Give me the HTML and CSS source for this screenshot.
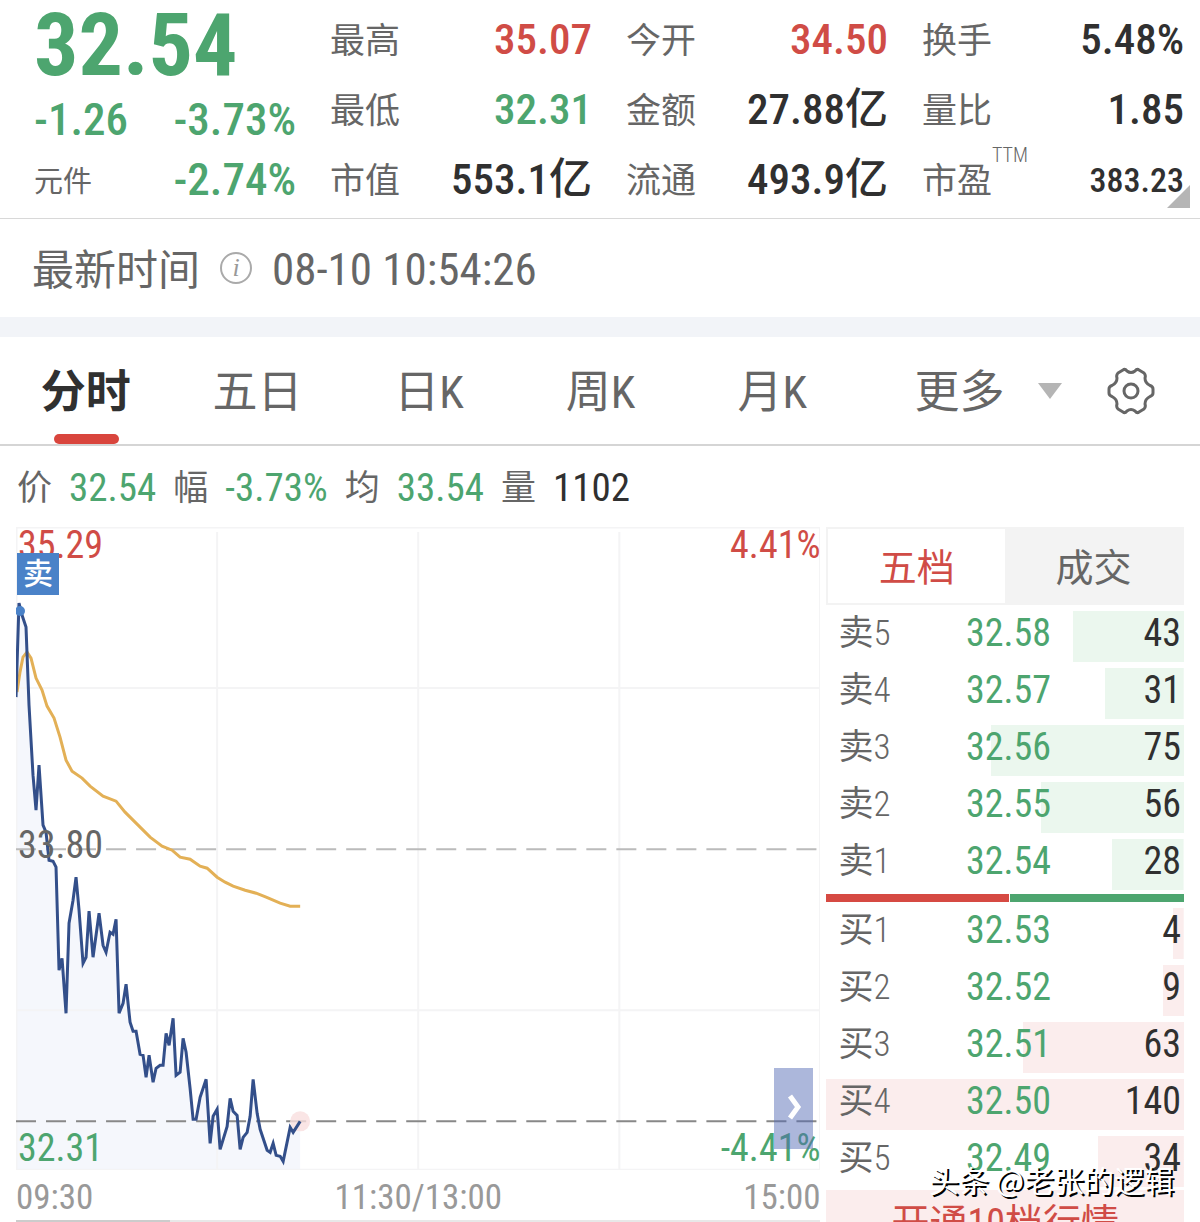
FILE: index.html
```
<!DOCTYPE html>
<html lang="zh-CN">
<head>
    <meta charset="UTF-8">
    <meta name="viewport" content="width=device-width, initial-scale=1.0">
    <title>分时行情</title>
    <link rel="stylesheet" href="styles.css">
</head>
<body>
    <div class="page">
        <!-- Quote summary -->
        <header class="quote">
            <div class="quote-main">
                <div class="price down">32.54</div>
                <div class="change down"><span>-1.26</span><span>-3.73%</span></div>
                <div class="change down"><span class="sector">元件</span><span>-2.74%</span></div>
            </div>
            <dl class="stats">
                <div class="stat"><dt>最高</dt><dd class="up">35.07</dd></div>
                <div class="stat"><dt>最低</dt><dd class="down">32.31</dd></div>
                <div class="stat"><dt>市值</dt><dd>553.1亿</dd></div>
            </dl>
            <dl class="stats">
                <div class="stat"><dt>今开</dt><dd class="up">34.50</dd></div>
                <div class="stat"><dt>金额</dt><dd>27.88亿</dd></div>
                <div class="stat"><dt>流通</dt><dd>493.9亿</dd></div>
            </dl>
            <dl class="stats">
                <div class="stat"><dt>换手</dt><dd>5.48%</dd></div>
                <div class="stat"><dt>量比</dt><dd>1.85</dd></div>
                <div class="stat"><dt>市盈<sup>TTM</sup></dt><dd class="small">383.23</dd></div>
            </dl>
            <span class="corner"></span>
        </header>

        <div class="time-row">
            <span class="time-label">最新时间</span>
            <button class="info" aria-label="说明">i</button>
            <time>08-10 10:54:26</time>
        </div>

        <nav class="tabs">
            <button class="tab active">分时</button>
            <button class="tab">五日</button>
            <button class="tab">日K</button>
            <button class="tab">周K</button>
            <button class="tab">月K</button>
            <button class="more"><span class="more-text">更多</span><span class="caret"></span></button>
            <button class="settings" aria-label="设置">
                <svg viewBox="0 0 48 48" width="48" height="48" fill="none" stroke="#666" stroke-width="3" stroke-linejoin="round">
                    <path d="M16 3 Q18 1.500 20 4 Q24 7 28 4 Q30 1.500 32 3 L37 6 Q39 8 38 11 Q38 16 43 18.500 Q46 19.500 46 22 V26 Q46 28.500 43 29.500 Q38 32 38 37 Q39 40 37 42 L32 45 Q30 46.500 28 44 Q24 41 20 44 Q18 46.500 16 45 L11 42 Q9 40 10 37 Q10 32 5 29.500 Q2 28.500 2 26 V22 Q2 19.500 5 18.500 Q10 16 10 11 Q9 8 11 6 Z"/>
                    <circle cx="24" cy="24" r="7"/>
                </svg>
            </button>
        </nav>

        <div class="legend">
            <span>价</span><b class="down">32.54</b>
            <span>幅</span><b class="down">-3.73%</b>
            <span>均</span><b class="down">33.54</b>
            <span>量</span><b>1102</b>
        </div>

        <main class="content">
            <section class="chart-area">
                <div class="chart">
                    <svg viewBox="16 527 804 643" fill="none">
                        <path class="area" d="M16 697 L19 603 22 615 26 627 29 705 33 775 36 810 39 765 43 825 46 832 49 860 53 861 56 867 59 970 62 958 66 1013 69 923 73 900 76 877 79 910 83 963 86 957 89 911 93 957 99 913 103 945 106 952 110 932 113 934 116 919 119 1013 123 1003 126 984 130 1022 133 1031 136 1031 140 1054 143 1055 146 1077 149 1055 153 1082 156 1068 160 1065 163 1065 166 1033 169 1045 173 1018 176 1075 180 1072 183 1038 186 1052 190 1088 193 1119 196 1119 200 1097 206 1079 210 1143 213 1116 217 1109 220 1149 227 1126 230 1098 233 1111 237 1115 240 1149 243 1137 247 1132 250 1116 253 1079 257 1113 260 1129 267 1150 270 1152 273 1143 276 1155 280 1156 283 1161 290 1127 293 1132 300 1121 V1170 H16 Z"/>
                        <path class="grid" d="M16 527.500 H820 M16 688 H820 M16 1010 H820 M16 1169.500 H820 M16.500 527 V1170 M217 532 V1170 M418 532 V1170 M619 532 V1170 M819.500 527 V1170"/>
                        <path class="dash" d="M16 849 H820"/>
                        <path class="dash dash-dark" d="M16 1121 H820"/>
                        <circle cx="300" cy="1121" r="10" fill="#f9dede" fill-opacity="0.8"/>
                        <path class="average" d="M17 692 L20 672 23 657 27 652 31 658 36 678 42 690 47 706 54 718 60 737 66 760 72 771 82 778 90 786 103 796 116 801 125 812 138 825 150 837 162 846 172 850 180 857 190 859 200 866 207 868 217 877 225 882 233 886 245 890 256 893 266 897 280 903 290 906 300 906"/>
                        <path class="line" d="M16 697 L19 603 22 615 26 627 29 705 33 775 36 810 39 765 43 825 46 832 49 860 53 861 56 867 59 970 62 958 66 1013 69 923 73 900 76 877 79 910 83 963 86 957 89 911 93 957 99 913 103 945 106 952 110 932 113 934 116 919 119 1013 123 1003 126 984 130 1022 133 1031 136 1031 140 1054 143 1055 146 1077 149 1055 153 1082 156 1068 160 1065 163 1065 166 1033 169 1045 173 1018 176 1075 180 1072 183 1038 186 1052 190 1088 193 1119 196 1119 200 1097 206 1079 210 1143 213 1116 217 1109 220 1149 227 1126 230 1098 233 1111 237 1115 240 1149 243 1137 247 1132 250 1116 253 1079 257 1113 260 1129 267 1150 270 1152 273 1143 276 1155 280 1156 283 1161 290 1127 293 1132 300 1121"/>
                        <circle cx="20" cy="611" r="5" fill="#4a82c8"/>
                    </svg>
                    <span class="label top-left up">35.29</span>
                    <span class="label top-right up">4.41%</span>
                    <span class="label middle-left">33.80</span>
                    <span class="label bottom-left down">32.31</span>
                    <span class="label bottom-right down">-4.41%</span>
                    <span class="sell-tag">卖</span>
                    <button class="expand" aria-label="展开">
                        <svg viewBox="0 0 16 28" width="16" height="28" fill="none" stroke="#fff" stroke-width="5">
                            <path d="M4 3 L12 14 L4 25"/>
                        </svg>
                    </button>
                </div>
                <div class="axis"><span>09:30</span><span>11:30/13:00</span><span>15:00</span></div>
                <div class="volume-edge"></div>
            </section>

            <aside class="book">
                <div class="book-tabs">
                    <button class="book-tab active">五档</button>
                    <button class="book-tab">成交</button>
                </div>
                <table class="orders sell">
                    <tr style="--size: 31%"><th scope="row">卖<span>5</span></th><td>32.58</td><td>43</td></tr>
                    <tr style="--size: 22%"><th scope="row">卖<span>4</span></th><td>32.57</td><td>31</td></tr>
                    <tr style="--size: 54%"><th scope="row">卖<span>3</span></th><td>32.56</td><td>75</td></tr>
                    <tr style="--size: 40%"><th scope="row">卖<span>2</span></th><td>32.55</td><td>56</td></tr>
                    <tr style="--size: 20%"><th scope="row">卖<span>1</span></th><td>32.54</td><td>28</td></tr>
                </table>
                <div class="ratio"><span class="ratio-buy"></span><span class="ratio-sell"></span></div>
                <table class="orders buy">
                    <tr style="--size: 3%"><th scope="row">买<span>1</span></th><td>32.53</td><td>4</td></tr>
                    <tr style="--size: 6%"><th scope="row">买<span>2</span></th><td>32.52</td><td>9</td></tr>
                    <tr style="--size: 45%"><th scope="row">买<span>3</span></th><td>32.51</td><td>63</td></tr>
                    <tr style="--size: 100%"><th scope="row">买<span>4</span></th><td>32.50</td><td>140</td></tr>
                    <tr style="--size: 24%"><th scope="row">买<span>5</span></th><td>32.49</td><td>34</td></tr>
                </table>
                <a class="upgrade" href="#">开通10档行情</a>
            </aside>
        </main>

        <div class="watermark">头条 @老张的逻辑</div>
    </div>
</body>
</html>
```
FILE: styles.css
```
* {
    box-sizing: border-box;
}

body {
    margin: 0;
    background-color: #fff;
    color: #666;
    font-family: "Roboto Condensed", "Noto Sans CJK SC", sans-serif;
    line-height: 1.2;
}

button {
    padding: 0;
    border: none;
    background: none;
    color: inherit;
    font: inherit;
    cursor: pointer;
}

dl,
dd {
    margin: 0;
}

.page {
    position: relative;
    height: 100vh;
    overflow: hidden;
}

.up {
    color: #d04c46;
}

.down {
    color: #4da56f;
}

/* Quote summary */
.quote {
    position: relative;
    display: grid;
    grid-template-columns: repeat(4, 1fr);
    gap: 34px;
    padding: 5px 16px 3px 34px;
    border-bottom: 1px solid #d8d8d8;
}

.price {
    height: 85px;
    line-height: 80px;
    font-size: 88px;
    font-weight: 700;
}

.change {
    display: flex;
    justify-content: space-between;
    align-items: center;
    height: 60px;
    font-size: 45px;
    font-weight: 500;
}

.sector {
    padding-top: 4px;
    color: #666;
    font-size: 29px;
    font-weight: 400;
}

.stat {
    display: flex;
    justify-content: space-between;
    align-items: center;
    height: 70px;
}

.stat dt {
    position: relative;
    padding-top: 4px;
    font-size: 35px;
}

.stat dd {
    color: #303030;
    font-size: 43px;
    font-weight: 500;
    white-space: nowrap;
}

.stat .up {
    color: #d04c46;
}

.stat .down {
    color: #4da56f;
}

.stat .small {
    font-size: 34px;
}

.stat sup {
    position: absolute;
    left: 100%;
    top: -12px;
    line-height: 20px;
    font-size: 20px;
    font-weight: 300;
}

.corner {
    position: absolute;
    right: 10px;
    bottom: 10px;
    border-left: 23px solid transparent;
    border-bottom: 23px solid #b5b5b5;
}

.time-row {
    display: flex;
    align-items: center;
    gap: 20px;
    height: 98px;
    padding: 0 32px;
    font-size: 42px;
}

.time-label {
    padding-top: 6px;
}

.time-row time {
    padding-top: 4px;
    font-size: 45px;
}

.info {
    width: 32px;
    height: 32px;
    border: 2px solid #aaa;
    border-radius: 50%;
    color: #999;
    font: italic 26px/26px "Liberation Serif", serif;
}

/* Period tabs */
.tabs {
    display: flex;
    align-items: center;
    height: 129px;
    border-top: 20px solid #f2f4f8;
    border-bottom: 2px solid #d5d5d5;
    font-size: 45px;
}

.tab {
    position: relative;
    width: 14.3%;
    height: 100%;
    padding-top: 4px;
}

.tab.active {
    color: #303030;
    font-weight: 700;
}

.tab.active::after {
    content: "";
    position: absolute;
    left: 50%;
    bottom: 0;
    width: 65px;
    height: 10px;
    margin-left: -32px;
    border-radius: 5px;
    background-color: #d9453d;
}

.more {
    display: flex;
    flex: 1;
    justify-content: center;
    align-items: center;
    gap: 34px;
    padding-left: 12px;
}

.more-text {
    padding-top: 4px;
}

.caret {
    border: 12px solid transparent;
    border-top: 16px solid #b5b5b5;
    border-bottom: none;
}

.settings {
    display: flex;
    margin-right: 45px;
}

.legend {
    display: flex;
    align-items: center;
    gap: 17px;
    height: 81px;
    padding: 4px 17px 0;
    font-size: 39px;
}

.legend span {
    font-size: 35px;
}

.legend b {
    font-weight: 400;
}

.legend b:last-child {
    color: #303030;
}

/* Chart and order book */
.content {
    display: grid;
    grid-template-columns: 9fr 4fr;
    align-items: start;
    gap: 6px;
    padding: 0 16px;
}

.chart {
    position: relative;
}

.chart > svg {
    display: block;
    width: 100%;
}

.grid {
    stroke: #f4f4f5;
    stroke-width: 2;
}

.area {
    fill: #f5f7fc;
}

.dash {
    stroke: #bbb;
    stroke-width: 2;
    stroke-dasharray: 20 10;
}

.dash-dark {
    stroke: #888;
}

.average {
    stroke: #e3b056;
    stroke-width: 3;
}

.line {
    stroke: #334f8a;
    stroke-width: 3;
}

.label {
    position: absolute;
    line-height: 36px;
    font-size: 38px;
}

.top-left,
.middle-left,
.bottom-left {
    left: 2px;
}

.top-right,
.bottom-right {
    right: 0;
}

.top-left,
.top-right {
    top: 0;
}

.middle-left {
    top: 50%;
    margin-top: -22px;
}

.bottom-left,
.bottom-right {
    bottom: 4px;
}

.sell-tag {
    position: absolute;
    left: 1px;
    top: 26px;
    width: 42px;
    line-height: 42px;
    background-color: #4a82c8;
    color: #fff;
    font-size: 30px;
    font-weight: 500;
    text-align: center;
}

.expand {
    position: absolute;
    right: 7px;
    bottom: 21px;
    width: 39px;
    height: 81px;
    background-color: rgba(82, 104, 180, 0.48);
}

.axis {
    display: flex;
    justify-content: space-between;
    height: 50px;
    line-height: 56px;
    color: #999;
    font-size: 35px;
}

.volume-edge {
    height: 2px;
    background: linear-gradient(#ccc, #ccc) left / 154px 2px no-repeat #e8e8e8;
}

.book-tabs {
    display: grid;
    grid-template-columns: 1fr 1fr;
    height: 78px;
    margin-bottom: 6px;
    border: 2px solid #f3f3f3;
    font-size: 38px;
}

.book-tab {
    padding-top: 6px;
    background-color: #f3f3f3;
}

.book-tab.active {
    background-color: #fff;
    color: #d04c46;
}

.orders {
    width: 100%;
    border-collapse: collapse;
    table-layout: fixed;
    font-size: 38px;
}

.orders tr {
    height: 57px;
    background: linear-gradient(var(--bar), var(--bar)) right top / var(--size) 51px no-repeat;
}

.sell tr {
    --bar: #ebf7ee;
}

.buy tr {
    --bar: #fbeded;
}

.orders th,
.orders td {
    padding: 0 0 12px;
    line-height: 45px;
    font-weight: 400;
    text-align: left;
}

.orders th {
    width: 39%;
    padding-left: 12px;
    font-size: 35px;
}

.orders th span {
    font-weight: 300;
}

.orders td {
    color: #4da56f;
}

.orders td:last-child {
    padding-right: 3px;
    color: #303030;
    text-align: right;
}

.ratio {
    display: flex;
    gap: 1px;
    height: 8px;
    margin: -2px 0 6px;
}

.ratio-buy {
    width: 51%;
    background-color: #d64a43;
}

.ratio-sell {
    flex: 1;
    background-color: #4da56f;
}

.upgrade {
    display: block;
    margin-top: -3px;
    background-color: #fbeded;
    color: #d04c46;
    line-height: 66px;
    font-size: 38px;
    text-align: center;
    text-decoration: none;
}

.watermark {
    position: absolute;
    right: 26px;
    bottom: 22px;
    color: #fff;
    line-height: 42px;
    font-family: "Noto Sans CJK SC", sans-serif;
    font-size: 30px;
    text-shadow: 2px 2px 0 #000;
}
```
